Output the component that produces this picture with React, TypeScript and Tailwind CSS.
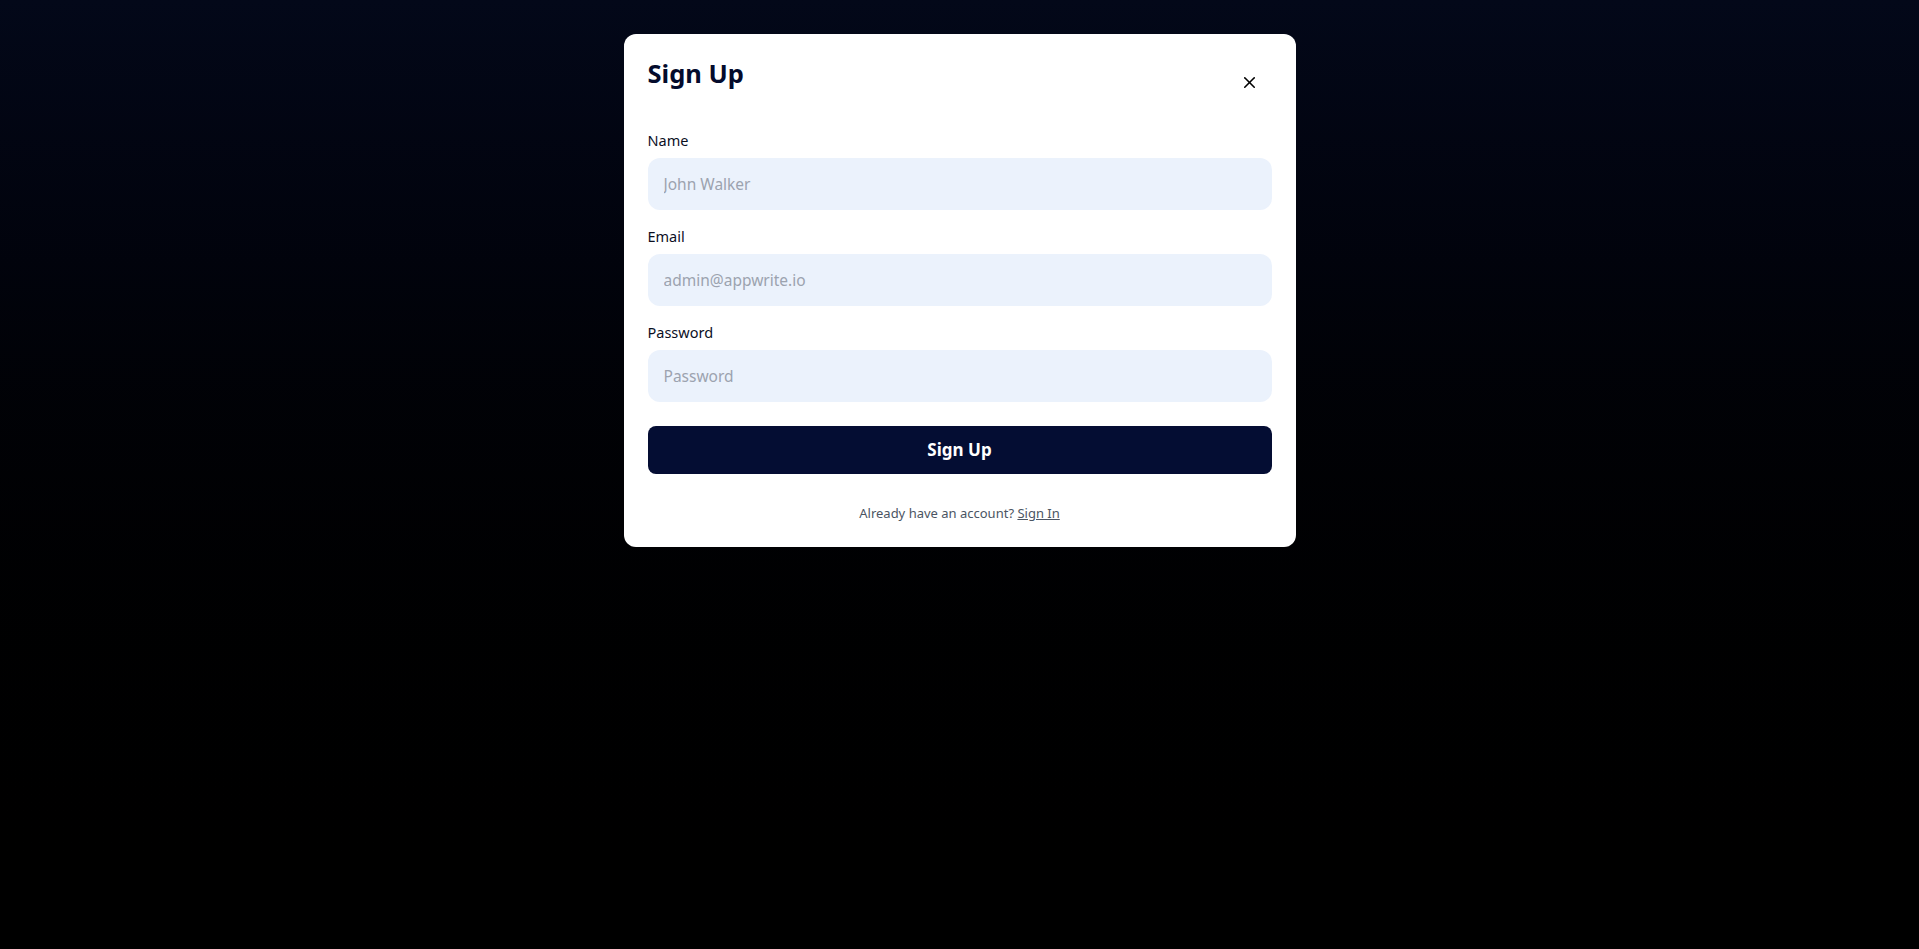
import { X } from 'lucide-react';

const font = { fontFamily: '"Noto Sans", "Open Sans", sans-serif' };

function Field({ label, placeholder, type = 'text' }: { label: string; placeholder: string; type?: string }) {
  return (
    <div className="flex flex-col gap-2">
      <label className="text-[14.5px] leading-5 text-[#0b0f1f]">{label}</label>
      <input
        type={type}
        placeholder={placeholder}
        className="h-[52px] w-full rounded-xl bg-[#ebf2fc] px-4 text-[15.5px] text-[#0b0f1f] placeholder:text-[#9ca3af] outline-none"
      />
    </div>
  );
}

export default function App() {
  return (
    <div
      style={font}
      className="min-h-screen w-full bg-gradient-to-b from-[#030819] to-[#000000] flex justify-center pt-[34px]"
    >
      <div className="w-[672px] h-fit rounded-xl bg-white px-6 pt-6 pb-[24px]">
        <div className="flex items-start justify-between">
          <h1 className="text-[25.5px] leading-8 font-bold text-[#040b2c] mt-[-1px]">Sign Up</h1>
          <button className="mt-[15px] mr-[13px] text-black">
            <X size={19} strokeWidth={2} />
          </button>
        </div>
        <div className="mt-[38px] flex flex-col gap-4">
          <Field label="Name" placeholder="John Walker" />
          <Field label="Email" placeholder="admin@appwrite.io" type="email" />
          <Field label="Password" placeholder="Password" type="password" />
        </div>
        <button className="mt-[24px] h-[48px] w-full rounded-lg bg-[#040d33] text-white text-[17px] font-bold">
          Sign Up
        </button>
        <p className="mt-[29px] text-center text-[13px] leading-5 text-[#4b5563]">
          Already have an account?{' '}
          <a href="#" className="underline text-[#4b5563]">
            Sign In
          </a>
        </p>
      </div>
    </div>
  );
}
